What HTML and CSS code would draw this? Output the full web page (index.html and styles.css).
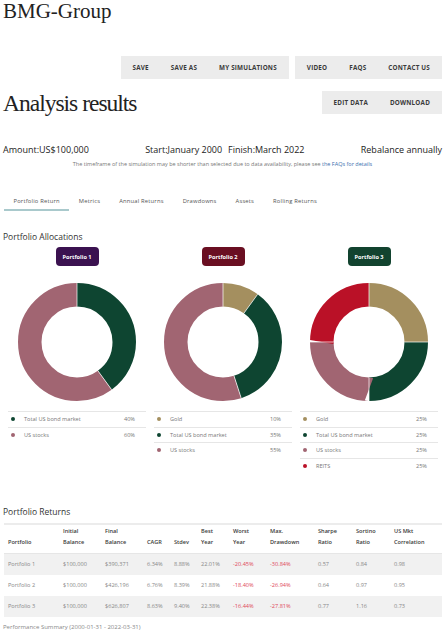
FILE: index.html
```html
<!DOCTYPE html>
<html lang="en">
<head>
<meta charset="utf-8">
<title>BMG-Group – Analysis results</title>
<link rel="stylesheet" href="styles.css">
</head>
<body>
<div class="page">
  <h2 class="brand">BMG-Group</h2>

  <nav class="nav">
    <div class="navgroup">
      <span>SAVE</span><span>SAVE AS</span><span>MY SIMULATIONS</span>
    </div>
    <div class="navgroup">
      <span>VIDEO</span><span>FAQS</span><span>CONTACT US</span>
    </div>
  </nav>

  <div class="heading-row">
    <h1 class="title">Analysis results</h1>
    <div class="navgroup">
      <span>EDIT DATA</span><span>DOWNLOAD</span>
    </div>
  </div>

  <div class="info">
    <span>Amount:US$100,000</span>
    <span class="mid"><span>Start:January 2000</span><span>Finish:March 2022</span></span>
    <span>Rebalance annually</span>
  </div>
  <p class="note">The timeframe of the simulation may be shorter than selected due to data availability, please see <a href="#">the FAQs for details</a></p>

  <div class="tabs">
    <span class="tab active">Portfolio Return</span>
    <span class="tab">Metrics</span>
    <span class="tab">Annual Returns</span>
    <span class="tab">Drawdowns</span>
    <span class="tab">Assets</span>
    <span class="tab">Rolling Returns</span>
  </div>

  <h3 class="section">Portfolio Allocations</h3>

  <div class="alloc">
    <div class="col">
      <div class="badge p1">Portfolio 1</div>
      <svg class="donut" viewBox="0 0 118 118" width="118" height="118">
        <g transform="rotate(-90 59 59)" fill="none" stroke-width="23.5">
          <circle cx="59" cy="59" r="47.25" pathLength="100" stroke="#0e4531" stroke-dasharray="40 60" stroke-dashoffset="0"/>
          <circle cx="59" cy="59" r="47.25" pathLength="100" stroke="#a16572" stroke-dasharray="60 40" stroke-dashoffset="-40"/>
        </g>
        <g stroke="#fff" stroke-width="0.7">
          <line x1="59" y1="23.5" x2="59" y2="0"/>
          <line x1="79.87" y1="87.72" x2="93.68" y2="106.73"/>
        </g>
      </svg>
      <div class="legend">
        <div class="lrow"><i class="dot green"></i><span class="lname">Total US bond market</span><span class="lval">40%</span></div>
        <div class="lrow"><i class="dot mauve"></i><span class="lname">US stocks</span><span class="lval">60%</span></div>
      </div>
    </div>

    <div class="col">
      <div class="badge p2">Portfolio 2</div>
      <svg class="donut" viewBox="0 0 118 118" width="118" height="118">
        <g transform="rotate(-90 59 59)" fill="none" stroke-width="23.5">
          <circle cx="59" cy="59" r="47.25" pathLength="100" stroke="#a48f5f" stroke-dasharray="10 90" stroke-dashoffset="0"/>
          <circle cx="59" cy="59" r="47.25" pathLength="100" stroke="#0e4531" stroke-dasharray="35 65" stroke-dashoffset="-10"/>
          <circle cx="59" cy="59" r="47.25" pathLength="100" stroke="#a16572" stroke-dasharray="55 45" stroke-dashoffset="-45"/>
        </g>
        <g stroke="#fff" stroke-width="0.7">
          <line x1="59" y1="23.5" x2="59" y2="0"/>
          <line x1="79.87" y1="30.28" x2="93.68" y2="11.27"/>
          <line x1="69.97" y1="92.76" x2="77.23" y2="115.11"/>
        </g>
      </svg>
      <div class="legend">
        <div class="lrow"><i class="dot gold"></i><span class="lname">Gold</span><span class="lval">10%</span></div>
        <div class="lrow"><i class="dot green"></i><span class="lname">Total US bond market</span><span class="lval">35%</span></div>
        <div class="lrow"><i class="dot mauve"></i><span class="lname">US stocks</span><span class="lval">55%</span></div>
      </div>
    </div>

    <div class="col">
      <div class="badge p3">Portfolio 3</div>
      <svg class="donut" viewBox="0 0 118 118" width="118" height="118">
        <g transform="rotate(-90 59 59)" fill="none" stroke-width="23.5">
          <circle cx="59" cy="59" r="47.25" pathLength="100" stroke="#a48f5f" stroke-dasharray="25 75" stroke-dashoffset="0"/>
          <circle cx="59" cy="59" r="47.25" pathLength="100" stroke="#0e4531" stroke-dasharray="25 75" stroke-dashoffset="-25"/>
          <circle cx="59" cy="59" r="47.25" pathLength="100" stroke="#a16572" stroke-dasharray="25 75" stroke-dashoffset="-50"/>
          <circle cx="59" cy="59" r="47.25" pathLength="100" stroke="#ba1127" stroke-dasharray="25 75" stroke-dashoffset="-75"/>
        </g>
        <g stroke="#fff" stroke-width="0.7">
          <line x1="59" y1="23.5" x2="59" y2="0"/>
          <line x1="94.5" y1="59" x2="118" y2="59"/>
          <line x1="59" y1="94.5" x2="59" y2="118"/>
          <line x1="23.5" y1="59" x2="0" y2="59"/>
        </g>
      </svg>
      <div class="legend">
        <div class="lrow"><i class="dot gold"></i><span class="lname">Gold</span><span class="lval">25%</span></div>
        <div class="lrow"><i class="dot green"></i><span class="lname">Total US bond market</span><span class="lval">25%</span></div>
        <div class="lrow"><i class="dot mauve"></i><span class="lname">US stocks</span><span class="lval">25%</span></div>
        <div class="lrow"><i class="dot red"></i><span class="lname">REITS</span><span class="lval">25%</span></div>
      </div>
    </div>
  </div>

  <h3 class="section returns-title">Portfolio Returns</h3>

  <table class="returns">
    <colgroup>
      <col class="c55"><col class="c42"><col class="c42"><col class="c27"><col class="c27"><col class="c32"><col class="c37"><col class="c48"><col class="c38"><col class="c38"><col class="c52">
    </colgroup>
    <thead>
      <tr>
        <th>Portfolio</th><th>Initial<br>Balance</th><th>Final<br>Balance</th><th>CAGR</th><th>Stdev</th><th>Best<br>Year</th><th>Worst<br>Year</th><th>Max.<br>Drawdown</th><th>Sharpe<br>Ratio</th><th>Sortino<br>Ratio</th><th>US Mkt<br>Correlation</th>
      </tr>
    </thead>
    <tbody>
      <tr class="shade">
        <td>Portfolio 1</td><td>$100,000</td><td>$390,371</td><td>6.34%</td><td>8.88%</td><td>22.01%</td><td class="neg">-20.45%</td><td class="neg">-30.84%</td><td>0.57</td><td>0.84</td><td>0.98</td>
      </tr>
      <tr>
        <td>Portfolio 2</td><td>$100,000</td><td>$426,196</td><td>6.76%</td><td>8.39%</td><td>21.88%</td><td class="neg">-18.40%</td><td class="neg">-26.94%</td><td>0.64</td><td>0.97</td><td>0.95</td>
      </tr>
      <tr class="shade">
        <td>Portfolio 3</td><td>$100,000</td><td>$626,807</td><td>8.63%</td><td>9.40%</td><td>22.38%</td><td class="neg">-16.44%</td><td class="neg">-27.81%</td><td>0.77</td><td>1.16</td><td>0.73</td>
      </tr>
    </tbody>
  </table>
  <p class="summary">Performance Summary (2000-01-31 - 2022-03-31)</p>
</div>
</body>
</html>
```

FILE: styles.css
```css
* { box-sizing: border-box; }

body {
  margin: 0;
  background: #fff;
  font-family: "Open Sans", "Noto Sans", sans-serif;
  color: #333;
}

.page {
  padding: 0 3px;
  width: 445px;
}

.brand {
  margin: 0;
  padding-top: 1px;
  font-family: "Liberation Serif", serif;
  font-weight: normal;
  font-size: 21px;
  line-height: 20px;
  color: #222;
}

.nav {
  display: flex;
  justify-content: flex-end;
  gap: 6px;
  margin-top: 35px;
}

.navgroup {
  display: flex;
  align-items: center;
  gap: 22px;
  height: 23px;
  padding: 0 12px;
  background: #ececec;
  font-size: 6.3px;
  letter-spacing: 0.2px;
  font-weight: 700;
  color: #3a3a3a;
  white-space: nowrap;
}

.heading-row {
  display: flex;
  justify-content: space-between;
  align-items: flex-start;
  margin-top: 12px;
}

.title {
  margin: 0;
  font-family: "Liberation Serif", serif;
  font-weight: normal;
  font-size: 23.5px;
  line-height: 24px;
  letter-spacing: -1px;
  color: #222;
}

.info {
  display: flex;
  justify-content: space-between;
  margin-top: 29px;
  font-size: 9px;
  line-height: 12px;
  color: #222;
}

.info .mid {
  display: flex;
  gap: 6px;
}

.note {
  margin: 4px 0 0;
  text-align: center;
  font-size: 5.5px;
  line-height: 8px;
  color: #777;
}

.note a {
  color: #3b6fae;
  text-decoration: none;
}

.tabs {
  display: flex;
  margin-top: 29px;
  margin-left: 1px;
}

.tab {
  padding: 0 9.5px 4px;
  font-size: 5.8px;
  letter-spacing: 0.2px;
  line-height: 8px;
  color: #555;
  border-bottom: 2px solid transparent;
}

.tab.active {
  border-bottom-color: #a9c9cc;
}

.section {
  margin: 20px 0 0;
  font-size: 8.5px;
  line-height: 11px;
  font-weight: 500;
  color: #333;
}

.alloc {
  display: grid;
  grid-template-columns: repeat(3, 146px);
  margin-left: 1px;
  margin-top: 5px;
}

.col {
  display: flex;
  flex-direction: column;
  align-items: center;
}

.badge {
  width: 43px;
  height: 19px;
  border-radius: 4px;
  display: flex;
  align-items: center;
  justify-content: center;
  color: #fff;
  font-size: 5.6px;
  font-weight: 700;
}

.p1 { background: #3b1250; }
.p2 { background: #6a0f22; }
.p3 { background: #12432f; }

.donut {
  display: block;
  margin-top: 17px;
}

.legend {
  width: 100%;
  padding: 0 4px;
  margin-top: 10px;
}

.lrow {
  display: flex;
  align-items: center;
  height: 15.5px;
  border-top: 1px solid #e6e6e6;
  padding: 0 11px 0 3px;
  font-size: 5.6px;
  color: #777;
}

.dot {
  width: 4px;
  height: 4px;
  border-radius: 50%;
  margin-right: 9px;
}

.green { background: #0e4531; }
.mauve { background: #a16572; }
.gold { background: #a48f5f; }
.red { background: #ba1127; }

.lname { flex: 1; }

.returns-title {
  margin-top: 33px;
}

.returns {
  margin-top: 5.5px;
  margin-left: 1px;
  width: 438px;
  border-collapse: collapse;
  table-layout: fixed;
  border-top: 2px solid #ececec;
  font-size: 5.6px;
}

.c55 { width: 55px; }
.c42 { width: 42px; }
.c27 { width: 27px; }
.c32 { width: 32px; }
.c37 { width: 37px; }
.c48 { width: 48px; }
.c38 { width: 38px; }
.c52 { width: 52px; }

.returns th {
  text-align: left;
  vertical-align: bottom;
  font-weight: 600;
  color: #3a3a3a;
  line-height: 10.5px;
  padding: 0 0 6px 4px;
  height: 30px;
  border-bottom: 1px solid #e6e6e6;
  white-space: nowrap;
}

.returns td {
  height: 21px;
  padding: 0 0 0 4px;
  color: #888;
  white-space: nowrap;
  vertical-align: middle;
}

.returns .shade td { background: #f1f1f1; }

.returns td.neg { color: #e0485a; }

.summary {
  margin: 6px 0 0;
  font-size: 6px;
  line-height: 8px;
  color: #888;
}
```
